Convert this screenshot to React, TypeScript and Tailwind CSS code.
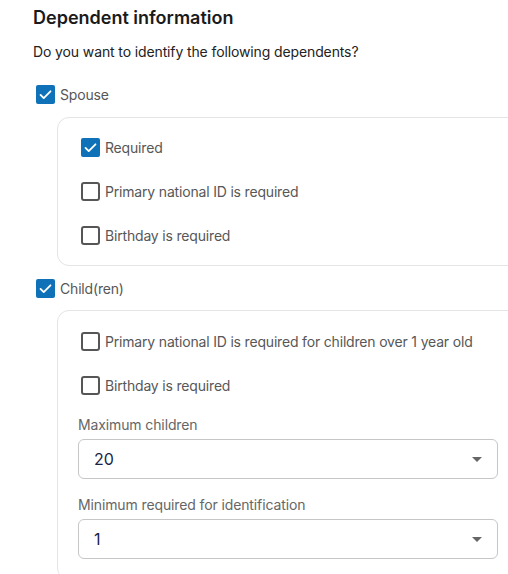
import React, { useState } from "react";

const FONT = { fontFamily: "Inter, 'Noto Sans', sans-serif" };

function Box({ checked, onClick }: { checked: boolean; onClick: () => void }) {
  return (
    <button
      type="button"
      onClick={onClick}
      className={
        checked
          ? "flex h-[19px] w-[19px] shrink-0 items-center justify-center rounded-[2px] bg-[#0f71b8]"
          : "h-[19px] w-[19px] shrink-0 rounded-[3px] border-2 border-[#565656] bg-white"
      }
    >
      {checked && (
        <svg viewBox="0 0 24 24" className="h-[17px] w-[17px]" fill="none">
          <path d="M5 12.5l4.5 4.5L19 7.5" stroke="white" strokeWidth={2.6} strokeLinecap="round" strokeLinejoin="round" />
        </svg>
      )}
    </button>
  );
}

function CheckRow({ label, initial, className }: { label: string; initial: boolean; className?: string }) {
  const [on, setOn] = useState(initial);
  return (
    <label
      className={
        "flex items-center gap-[5px] pl-[3px] text-[14px] tracking-[-0.18px] text-[#575757] " + (className ?? "h-[44px]")
      }
    >
      <Box checked={on} onClick={() => setOn(!on)} />
      <span>{label}</span>
    </label>
  );
}

function Select({ value }: { value: string }) {
  return (
    <div className="flex h-[40px] w-full items-center justify-between rounded-[6px] border border-[#c6c6c6] bg-white pl-[15px] pr-[15px]">
      <span className="text-[16px] text-[#1b2345]">{value}</span>
      <svg viewBox="0 0 10 5" className="h-[5px] w-[10px]">
        <path d="M0 0h10L5 5z" fill="#666666" />
      </svg>
    </div>
  );
}

export default function App() {
  return (
    <div className="h-[574px] w-[508px] overflow-hidden bg-white" style={FONT}>
      <div className="pl-[33px] pt-[6px]">
        <h1 className="text-[18px] font-semibold leading-[24px] text-[#1a1a1a]">Dependent information</h1>
        <p className="mt-[12px] text-[14px] leading-[20px] tracking-[-0.12px] text-[#222222]">
          Do you want to identify the following dependents?
        </p>

        <CheckRow label="Spouse" initial={true} className="mt-[10px] h-[44px]" />
        <div className="ml-[24px] mt-[1px] w-[462px] rounded-[12px] border border-[#e4e4e4] px-[20px] pb-[8px] pt-[7px]">
          <CheckRow label="Required" initial={true} />
          <CheckRow label="Primary national ID is required" initial={false} />
          <CheckRow label="Birthday is required" initial={false} />
        </div>

        <CheckRow label="Child(ren)" initial={true} className="mt-[1px] h-[43px]" />
        <div className="ml-[24px] w-[462px] rounded-[12px] border border-[#e4e4e4] px-[20px] pb-[20px] pt-[8px]">
          <CheckRow label="Primary national ID is required for children over 1 year old" initial={false} />
          <CheckRow label="Birthday is required" initial={false} />
          <div className="mt-[8px] text-[14px] leading-[20px] tracking-[-0.12px] text-[#666666]">Maximum children</div>
          <div className="mt-[4px]">
            <Select value="20" />
          </div>
          <div className="mt-[16px] text-[14px] leading-[20px] tracking-[-0.12px] text-[#666666]">
            Minimum required for identification
          </div>
          <div className="mt-[4px]">
            <Select value="1" />
          </div>
        </div>
      </div>
    </div>
  );
}
